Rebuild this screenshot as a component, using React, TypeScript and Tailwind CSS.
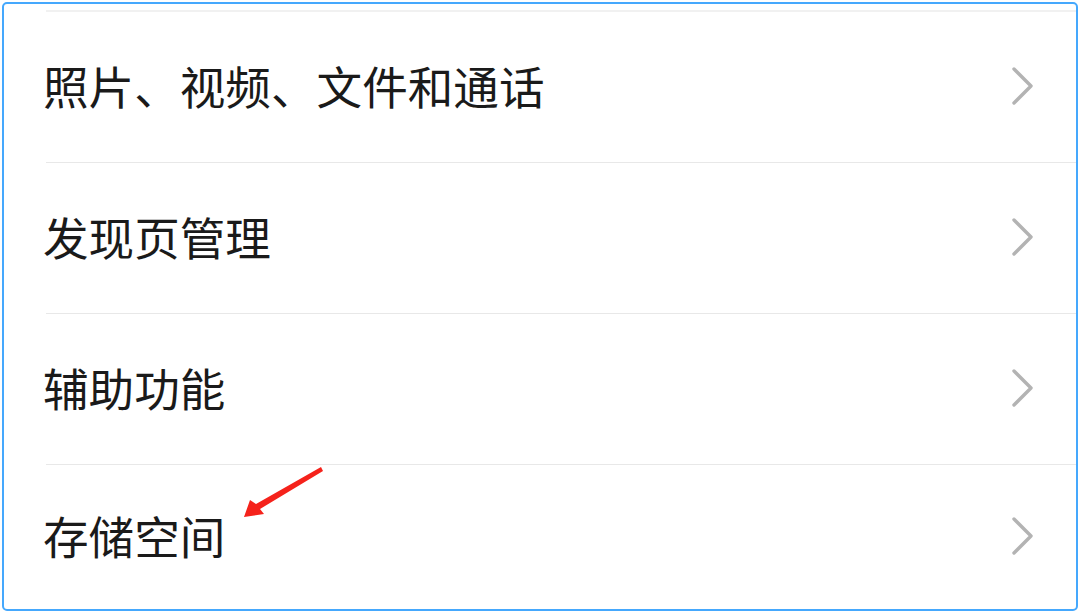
import React from "react";

const items = ["照片、视频、文件和通话", "发现页管理", "辅助功能", "存储空间"];

function Chevron() {
  return (
    <svg width="24" height="40" viewBox="0 0 24 40" className="shrink-0">
      <polyline points="3,2 20,19 3,36" fill="none" stroke="#b3b3b3" strokeWidth="3.4" strokeLinecap="round" strokeLinejoin="round" />
    </svg>
  );
}

export default function App() {
  return (
    <div className="relative w-[1080px] h-[614px] bg-white pl-[2px] pt-[2px] overflow-hidden" style={{ fontFamily: '"Noto Sans CJK SC", "Noto Sans", sans-serif' }}>
      <div className="w-[1076px] h-[609px] border-[2.5px] border-[#45a8fd] rounded-[5px] flex flex-col">
        <div className="h-[6px]" />
        <div className="ml-[42px] h-[2px] bg-[#f1f1f1]" />
        {items.map((t, i) => (
          <div key={t} className="flex flex-col">
            <div className={`flex items-center pl-[39px] pr-[41px] ${i === 3 ? "h-[143px]" : "h-[150px]"}`}>
              <span className="flex-1 text-[45.6px] leading-none text-[#1a1a1a] pb-[2px]">{t}</span>
              <Chevron />
            </div>
            {i < 3 && <div className="ml-[42px] h-px bg-[#e8e8e8]" />}
          </div>
        ))}
      </div>
      <svg className="absolute left-0 top-0 pointer-events-none" width="1080" height="614">
        <polygon points="321,467 323,471 260,509 264,514 244,517 250,500 256,504" fill="#f5221b" />
      </svg>
    </div>
  );
}
